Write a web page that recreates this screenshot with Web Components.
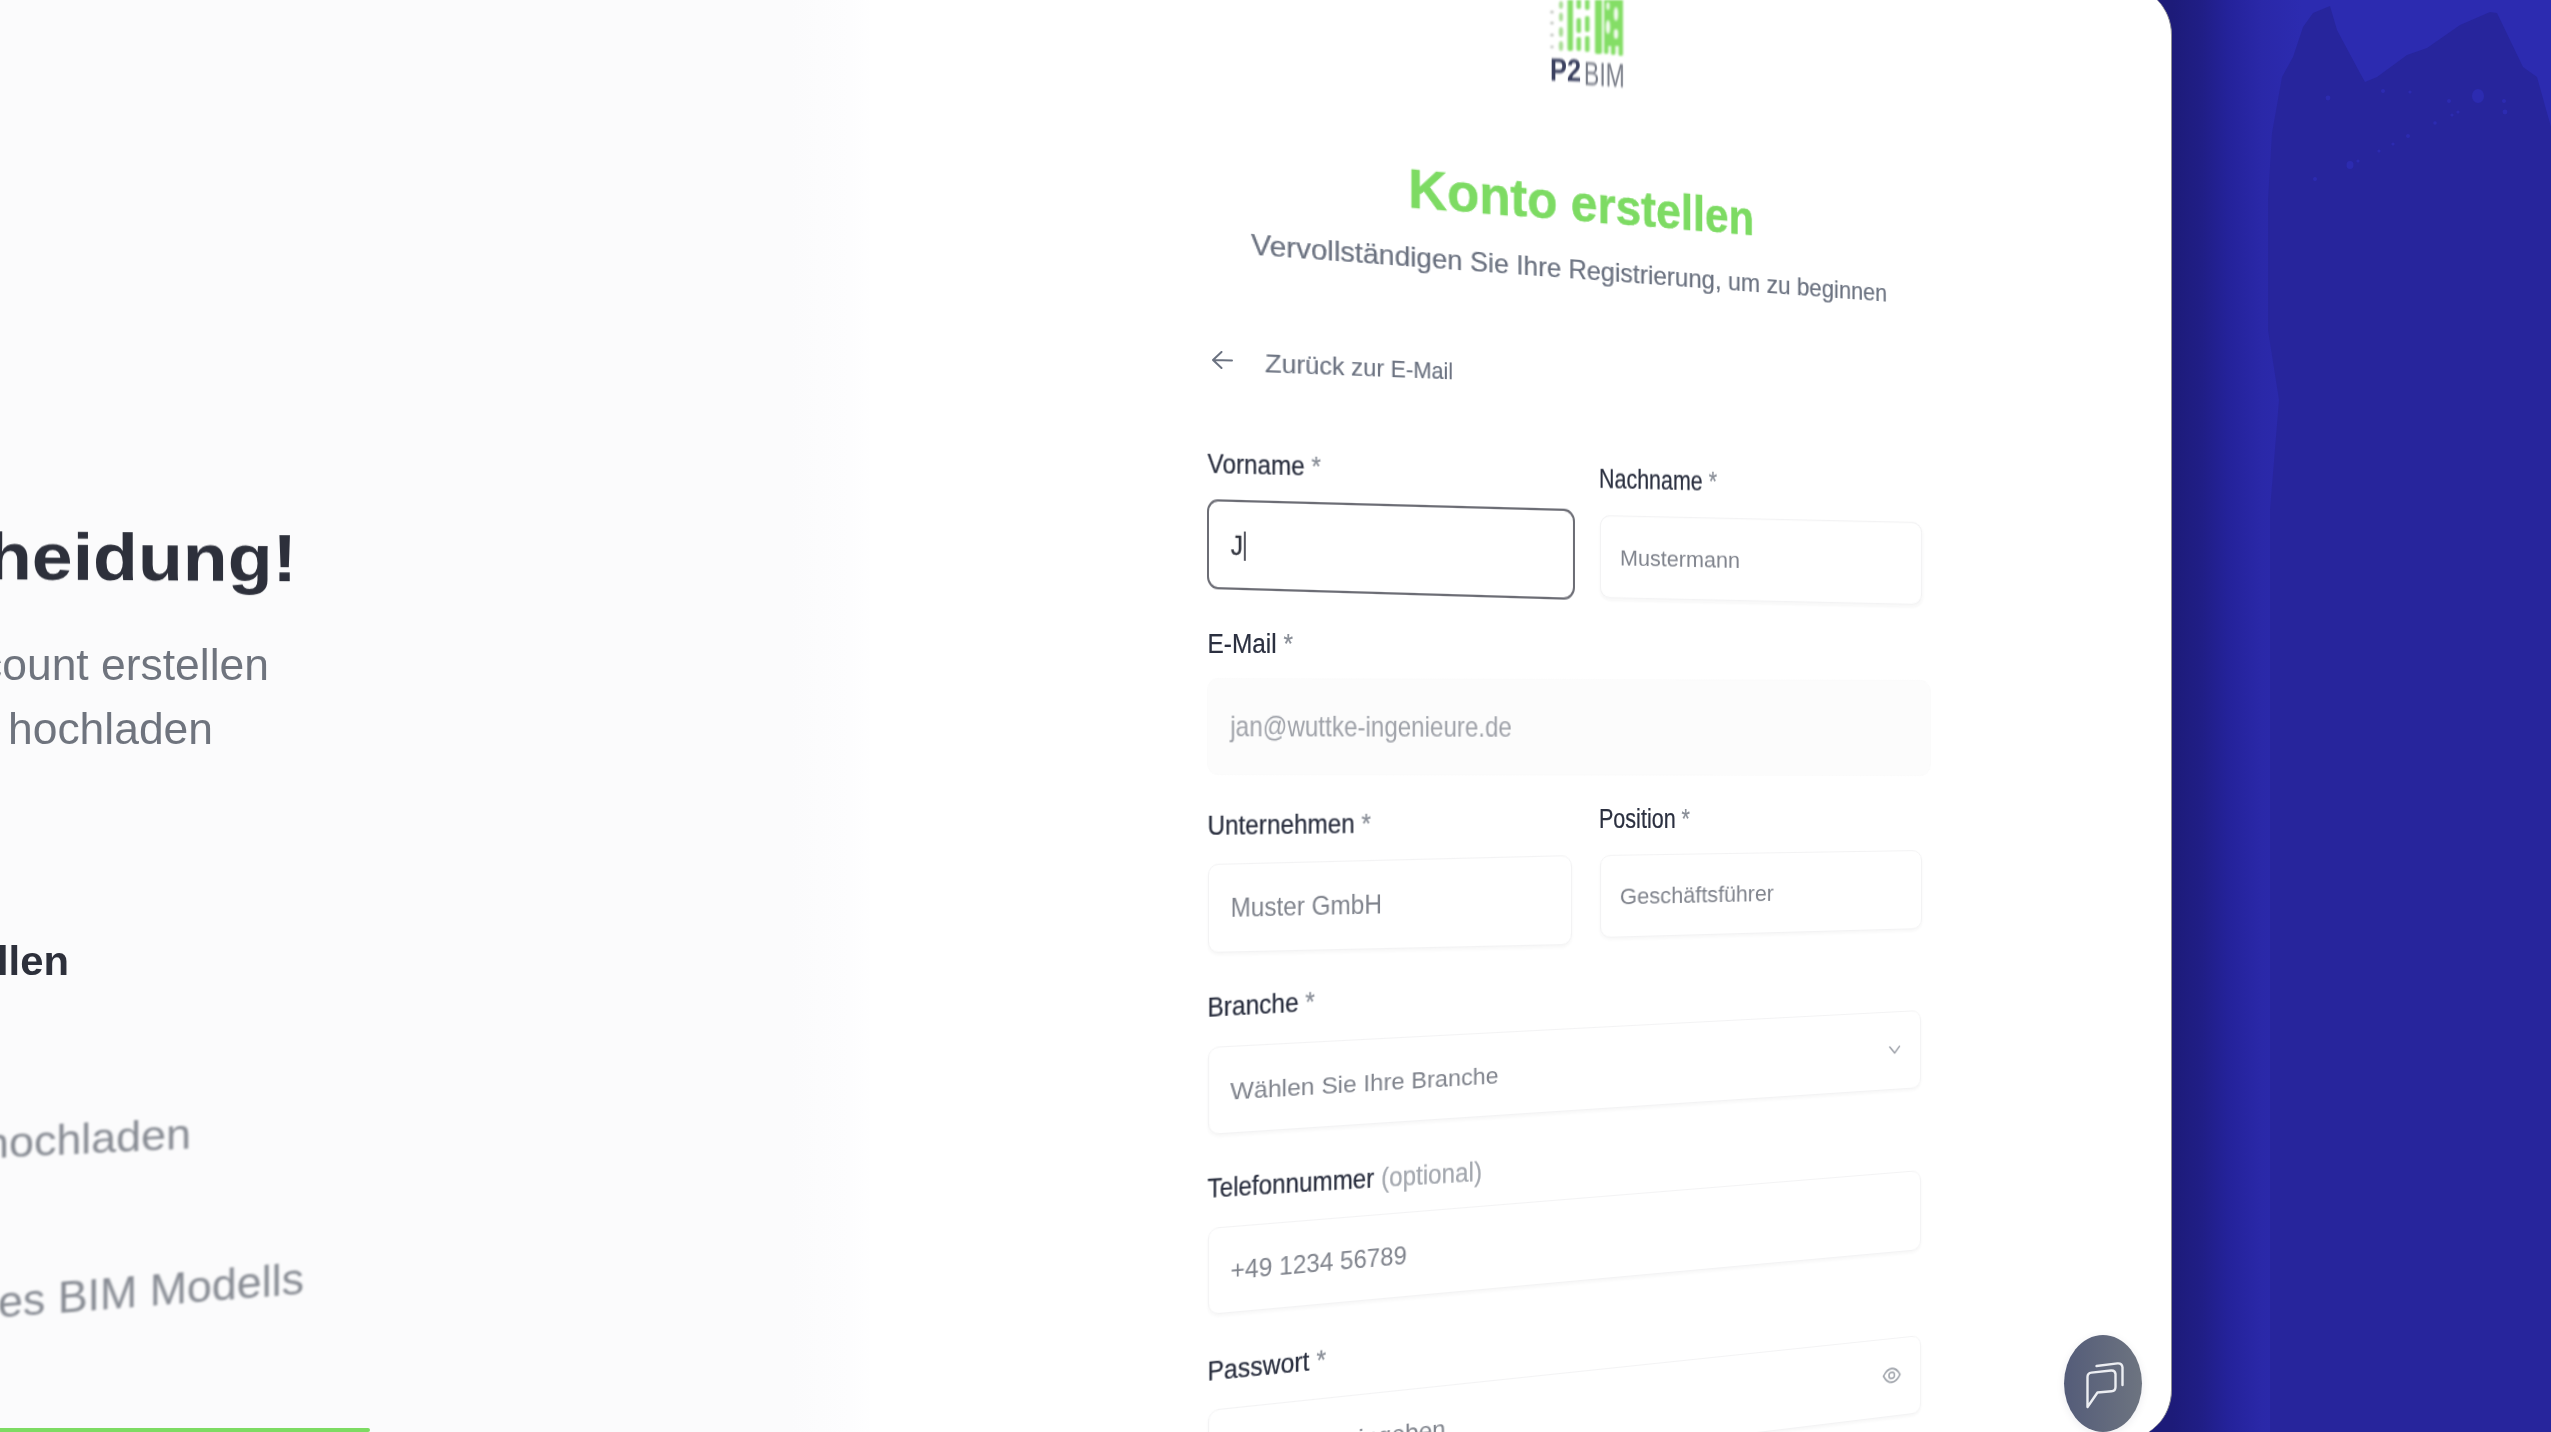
<!DOCTYPE html>
<html lang="de">
<head>
<meta charset="utf-8">
<title>P2BIM – Konto erstellen</title>
<style>
html,body{margin:0;padding:0;width:2551px;height:1432px;overflow:hidden;background:#1d1b79;font-family:"Liberation Sans",Arial,sans-serif}
</style>
</head>
<body>
<p2-stage>
  <p2-intro slot="intro">
    <p2-text f="68" v=".97" w="700" c="#2d303b" l="-13 579" r="297 581" b=".7" style="margin-top:520px">heidung!</p2-text>
    <p2-text f="44" v="1" c="#6f747e" l="-20 680" r="269 680" b=".7" style="margin-top:50px">count erstellen</p2-text>
    <p2-text f="44" v="1" c="#6f747e" l="8 744" r="213 744" b=".7" style="margin-top:22px">hochladen</p2-text>
    <p2-text f="40" v="1" w="700" c="#2d303b" l="-3 975" r="69 975" b=".7" style="margin-top:190px">llen</p2-text>
    <p2-text f="42" v="1" c="#878b93" l="-16 1159" r="191 1149" b=".8" style="margin-top:140px">hochladen</p2-text>
    <p2-text f="44" v="1" c="#878b93" l="-2 1318" r="304 1294" b=".8" style="margin-top:110px">es BIM Modells</p2-text>
    <p2-bar></p2-bar>
  </p2-intro>
  <p2-form slot="form">
    <p2-logo></p2-logo>
    <p2-text f="47" v="1.19 1.03" w="700" s=".5" c="#7ddb63" l="1408 207" r="1754 235" b=".6" style="margin-top:80px;margin-left:200px">Konto erstellen</p2-text>
    <p2-text f="24" v="1.22 1.02" s=".2" c="#6b7280" l="1251 255" r="1887 302" b=".5" style="margin-top:16px;margin-left:40px">Vervollständigen Sie Ihre Registrierung, um zu beginnen</p2-text>
    <p2-back></p2-back>
    <p2-row>
      <p2-field l="1207.500 473" r="1321 476" q="1207 499 1575 509 1575 600 1207 589" fs="24" kind="focus" value="J" pad="22 2">Vorname <i>*</i></p2-field>
      <p2-field l="1599 488" r="1717 491" q="1600 515 1922 522 1922 605 1600 598" fs="21.6" ph="Mustermann" pad="19 1">Nachname <i>*</i></p2-field>
    </p2-row>
    <p2-field l="1207.500 653" r="1293 653" q="1207 678 1931 680 1931 776 1207 775" fs="24" kind="disabled" ph="jan@wuttke-ingenieure.de" pad="22 0">E-Mail <i>*</i></p2-field>
    <p2-row>
      <p2-field l="1207.500 835" r="1371 833" q="1208 864 1572 855 1572 945 1208 953" fs="24.6" ph="Muster GmbH" pad="22 0">Unternehmen <i>*</i></p2-field>
      <p2-field l="1599 828" r="1690 828" q="1600 855 1922 850 1922 929 1600 938" fs="21.2" ph="Geschäftsführer" pad="18 2">Position <i>*</i></p2-field>
    </p2-row>
    <p2-field l="1207.500 1017" r="1315 1011" q="1208 1047 1921 1010 1921 1088 1208 1135" fs="22.8" ph="Wählen Sie Ihre Branche" icon="chevron" pad="19 2">Branche <i>*</i></p2-field>
    <p2-field l="1207.500 1198" r="1482 1181" q="1208 1228 1921 1170 1921 1250 1208 1315" fs="23.2" ph="+49 1234 56789" pad="20 3">Telefonnummer <i style="color:#a4a8af">(optional)</i></p2-field>
    <p2-field l="1207.500 1381" r="1326 1369" q="1208 1410 1921 1335 1921 1413 1208 1500" fs="23.2" ph="Passwort eingeben" icon="eye" pad="20 3">Passwort <i>*</i></p2-field>
  </p2-form>
  <p2-chat slot="chat"></p2-chat>
</p2-stage>

<script>
const warpers=[];
function homography(w,h,p){
  const [x0,y0,x1,y1,x2,y2,x3,y3]=p;
  const sx=x0-x1+x2-x3, sy=y0-y1+y2-y3, dx1=x1-x2, dx2=x3-x2, dy1=y1-y2, dy2=y3-y2;
  const den=dx1*dy2-dx2*dy1;
  const g=(sx*dy2-dx2*sy)/den, k=(dx1*sy-sx*dy1)/den;
  const a=(x1-x0+g*x1)/w, b=(x3-x0+k*x3)/h, d=(y1-y0+g*y1)/w, e=(y3-y0+k*y3)/h;
  return `matrix3d(${a},${d},0,${g/w},${b},${e},0,${k/h},0,0,1,0,${x0},${y0},0,1)`;
}
function nums(s){return (s||'').trim().split(/\s+/).map(Number)}

class P2Text extends HTMLElement{
  constructor(){super();
    const f=this.getAttribute('f')||24;
    const stroke=this.getAttribute('s')||0;
    this.attachShadow({mode:'open'}).innerHTML=`<style>
      :host{display:inline-block;flex:none;white-space:nowrap;line-height:1;font-family:"Liberation Sans",Arial,sans-serif;
        font-size:${f}px;font-weight:${this.getAttribute('w')||400};color:${this.getAttribute('c')||'#2b3040'};
        -webkit-text-stroke:${stroke}px currentColor;
        transform-origin:0 0;filter:blur(${this.getAttribute('b')||.55}px);align-self:flex-start}
      ::slotted(i){font-style:normal;color:#8a8f98}
    </style><slot></slot>`;
  }
  connectedCallback(){warpers.push(this)}
  quad(){
    const F=+this.getAttribute('f')||24, vv=nums(this.getAttribute('v')||'1');
    const sl=vv[0], sr=vv[1]===undefined?vv[0]:vv[1];
    const [xl,yl]=nums(this.getAttribute('l')), [xr,yr]=nums(this.getAttribute('r'));
    const up=.8465*F, dn=.1535*F;
    return [xl,yl-up*sl, xr,yr-up*sr, xr,yr+dn*sr, xl,yl+dn*sl];
  }
}
class P2Input extends HTMLElement{
  constructor(){super();
    const icon=this.getAttribute('icon')||'';
    const fs=this.getAttribute('fs')||24;
    const [pl,pt]=nums(this.getAttribute('pad')||'22 2');
    const ic=icon==='chevron'
      ?`<svg width="14" height="10" viewBox="0 0 14 10" fill="none" stroke="#9a9ea6" stroke-width="1.6" stroke-linecap="round" stroke-linejoin="round"><path d="M1.5 2 7 8.5 12.5 2"/></svg>`
      :icon==='eye'
      ?`<svg width="22" height="22" viewBox="0 0 22 22" fill="none" stroke="#a3a7ae" stroke-width="1.8" style="margin-top:-8px"><path d="M1.5 11C4 6.5 7.2 4 11 4s7 2.5 9.5 7c-2.5 4.5-5.700 7-9.500 7S4 15.500 1.500 11Z"/><circle cx="11" cy="11" r="3.200"/></svg>`:'';
    const content=this.hasAttribute('value')
      ?`<span class="val">${this.getAttribute('value')}</span><span class="caret"></span>`
      :`<span class="ph">${this.getAttribute('ph')||''}</span>`;
    this.attachShadow({mode:'open'}).innerHTML=`<style>
      :host{display:block;box-sizing:border-box;height:80px;transform-origin:0 0;background:#fff;
        border:1px solid #f3f3f4;border-radius:10px;box-shadow:0 2px 3px rgba(40,40,60,.04);
        filter:blur(.7px);font:${fs}px/1 "Liberation Sans",Arial,sans-serif}
      :host([kind=focus]){border:2px solid #6c6d75;border-radius:11px;box-shadow:none;filter:blur(.4px)}
      :host([kind=disabled]){background:#fcfcfc;border-color:#fbfbfb;box-shadow:none}
      .in{height:100%;box-sizing:border-box;display:flex;align-items:center;padding:${pt}px 24px 0 ${pl}px}
      :host([icon]) .in{padding-right:22px}
      .ph{color:#80848d;white-space:nowrap}
      :host([kind=disabled]) .ph{color:#a0a3aa}
      .val{color:#30333d;-webkit-text-stroke:.3px currentColor}.caret{width:1.500px;height:26px;background:#55565f;margin-left:1px}
      .sp{flex:1}
      svg{flex:none;margin-top:-4px}
    </style><div class="in">${content}<span class="sp"></span>${ic}</div>`;
  }
  connectedCallback(){warpers.push(this)}
  quad(){return nums(this.getAttribute('q'))}
}
class P2Field extends HTMLElement{
  constructor(){super();
    const A=n=>this.getAttribute(n);
    const kindAttr=A('kind')?`kind="${A('kind')}"`:'';
    const iconAttr=A('icon')?`icon="${A('icon')}"`:'';
    const valAttr=A('value')?`value="${A('value')}"`:'';
    this.attachShadow({mode:'open'}).innerHTML=`<style>
      :host{display:flex;flex-direction:column;gap:14px;min-width:0}
    </style>
    <p2-text f="24" v="1.13" s=".22" l="${A('l')}" r="${A('r')}"><slot></slot></p2-text>
    <p2-input q="${A('q')}" fs="${A('fs')}" pad="${A('pad')||'22 2'}" ph="${A('ph')||''}" ${kindAttr} ${iconAttr} ${valAttr}></p2-input>`;
  }
}
class P2Row extends HTMLElement{
  constructor(){super();
    this.attachShadow({mode:'open'}).innerHTML=`<style>:host{display:grid;grid-template-columns:366px 322px;column-gap:26px}</style><slot></slot>`;
  }
}
class P2Back extends HTMLElement{
  constructor(){super();
    this.attachShadow({mode:'open'}).innerHTML=`<style>
      :host{display:flex;align-items:center;gap:32px;margin-top:38px;margin-left:3px}
      svg{flex:none;filter:blur(.4px)}
    </style>
    <svg width="22" height="20" viewBox="0 0 22 20" fill="none" stroke="#6b7280" stroke-width="2" stroke-linecap="round" stroke-linejoin="round"><path d="M21 10.500 2 10M10.500 2 2 10l8.500 8"/></svg>
    <p2-text f="22" v="1.2 1.05" s=".15" c="#6b7280" l="1265 373" r="1453 380">Zurück zur E-Mail</p2-text>`;
  }
}
class P2Logo extends HTMLElement{
  constructor(){super();
    const g='#84de66';
    this.attachShadow({mode:'open'}).innerHTML=`<style>
      :host{display:flex;flex-direction:column;margin-left:341px;height:90px;align-self:flex-start}
      svg{display:block;filter:blur(.9px)}
      .t{display:flex;gap:3px}
    </style>
    <svg width="76" height="58" viewBox="0 0 76 58">
      <g fill="#b7bdb6"><circle cx="3" cy="12" r="1.600"/><circle cx="3" cy="23" r="1.600"/><circle cx="3" cy="35" r="1.600"/><circle cx="3" cy="47" r="1.400"/></g>
      <g fill="#a9dd96"><ellipse cx="12" cy="5" rx="2" ry="4"/><ellipse cx="12" cy="17" rx="2" ry="4.500"/><ellipse cx="12" cy="32" rx="2.200" ry="5"/><ellipse cx="12" cy="46" rx="2.200" ry="5"/></g>
      <g fill="${g}">
        <rect x="18.500" y="-2" width="5.500" height="53" rx="2"/>
        <rect x="27.500" y="-2" width="4.500" height="11" rx="2"/><rect x="27.500" y="18" width="4.500" height="15" rx="2"/><rect x="27.500" y="37" width="4.500" height="14" rx="2"/>
        <rect x="36" y="-2" width="4.500" height="12" rx="2"/><rect x="36" y="16" width="4.500" height="16" rx="2"/><rect x="36" y="36" width="4.500" height="16" rx="2"/>
        <rect x="46" y="-2" width="7" height="56" rx="2"/>
        <rect x="55" y="-2" width="19" height="48"/>
        <rect x="55" y="42" width="4.500" height="12" rx="2"/><rect x="62" y="42" width="4.500" height="13" rx="2"/><rect x="69.500" y="42" width="4.500" height="14" rx="2"/>
      </g>
      <g fill="#f2fbee"><ellipse cx="59" cy="27" rx="2.200" ry="7"/><ellipse cx="67" cy="14" rx="2.200" ry="7"/><ellipse cx="67" cy="34" rx="2.200" ry="5"/><ellipse cx="59" cy="6" rx="1.600" ry="4"/></g>
    </svg>
    <div class="t">
      <p2-text f="32" v="1" w="700" c="#3b4160" l="1550 80.500" r="1581 81.500" b=".8">P2</p2-text>
      <p2-text f="32" v="1.02" c="#797d88" l="1584 84.500" r="1625 87" b=".8">BIM</p2-text>
    </div>`;
  }
}
class P2Bar extends HTMLElement{
  constructor(){super();
    this.attachShadow({mode:'open'}).innerHTML=`<style>:host{display:block;width:370px;height:4px;background:#7ddb63;margin-top:auto;border-radius:0 2px 2px 0;flex:none}</style>`;
  }
}
class P2Intro extends HTMLElement{
  constructor(){super();
    this.attachShadow({mode:'open'}).innerHTML=`<style>
      :host{display:flex;flex-direction:column;height:100%;box-sizing:border-box;padding-bottom:8px;
        width:870px;flex:none;background:linear-gradient(90deg,#fbfbfc 0,#fbfbfc 790px,#fdfdfe 850px,#fff 880px)}
    </style><slot></slot>`;
  }
}
class P2Form extends HTMLElement{
  constructor(){super();
    this.attachShadow({mode:'open'}).innerHTML=`<style>
      :host{display:flex;flex-direction:column;gap:18px;flex:none;width:722px;padding-top:15px;margin-left:338px}
    </style><slot></slot>`;
  }
}
class P2Chat extends HTMLElement{
  constructor(){super();
    this.attachShadow({mode:'open'}).innerHTML=`<style>
      :host{position:absolute;right:29px;bottom:8px;width:78px;height:97px;border-radius:50%;
        background:linear-gradient(90deg,#545c79,#6d7480);filter:blur(.4px);box-shadow:0 2px 8px rgba(30,30,60,.08)}
      svg{display:block}
    </style>
    <svg width="78" height="97" viewBox="0 0 78 97" fill="none" stroke="#eceef2" stroke-width="2.400" stroke-linecap="round" stroke-linejoin="round">
      <path d="M23.500 72V42q0-4 4-4.400l19.500-2.100q4-.4 4.500 3.500V52q0 4-4 4.200L33.500 57.500Z"/>
      <path d="M32.500 31l21-2.600q4.500-.4 5 4V50"/>
    </svg>`;
  }
}
class P2Aside extends HTMLElement{
  constructor(){super();
    this.attachShadow({mode:'open'}).innerHTML=`<style>
      :host{display:block;position:relative;flex:1;min-width:0;height:100%;overflow:hidden;
        background:linear-gradient(90deg,#1d1b79 0,#201e86 30px,#24229a 56px,#2a28a8 90px,#2c2bb0 130px)}
      svg{display:block;position:absolute;inset:0}
    </style>
    <svg width="379" height="1432" viewBox="0 0 379 1432">
      <path fill="#27259c" d="M98 1432V510L107 400 96 330V200L100 133 110 77 121 57 131 27 141 13 158 6 165 30 188 73 193 82 205 77 235 55 255 48 288 25 318 12 325 13 351 67 365 77 379 127V1432Z"/>
      <g fill="#2c2bb0"><circle cx="156" cy="98" r="2.400"/><circle cx="211" cy="91" r="2"/><circle cx="238" cy="92" r="1.600"/><ellipse cx="306" cy="96" rx="6" ry="7"/><circle cx="277" cy="101" r="2"/><circle cx="332" cy="101" r="2"/><circle cx="333" cy="112" r="2.400"/><circle cx="286" cy="112" r="1.600"/><circle cx="280" cy="115" r="1.600"/><circle cx="263" cy="123" r="1.800"/><circle cx="236" cy="136" r="2"/><circle cx="221" cy="144" r="1.600"/><circle cx="207" cy="151" r="1.600"/><circle cx="186" cy="161" r="1.600"/><ellipse cx="178" cy="165" rx="3.500" ry="4"/><circle cx="143" cy="179" r="2"/></g>
    </svg>`;
  }
}
class P2Stage extends HTMLElement{
  constructor(){super();
    this.attachShadow({mode:'open'}).innerHTML=`<style>
      :host{display:flex;width:2551px;height:1432px;overflow:hidden;position:relative;background:#1d1b79}
      .card{display:flex;width:2172px;height:1455px;margin-top:-15px;flex:none;background:#fff;overflow:hidden;
        border-radius:0 50px 50px 0;border-right:1px solid #8d8d96;box-sizing:border-box;position:relative;z-index:1}
      .wrap{display:flex;width:100%;height:100%}
      .side{height:1432px}
    </style>
    <div class="card"><div class="wrap"><slot name="intro"></slot><slot name="form"></slot></div><slot name="chat"></slot></div>
    <p2-aside class="side"></p2-aside>`;
  }
}
customElements.define('p2-text',P2Text);
customElements.define('p2-input',P2Input);
customElements.define('p2-field',P2Field);
customElements.define('p2-row',P2Row);
customElements.define('p2-back',P2Back);
customElements.define('p2-logo',P2Logo);
customElements.define('p2-bar',P2Bar);
customElements.define('p2-intro',P2Intro);
customElements.define('p2-form',P2Form);
customElements.define('p2-chat',P2Chat);
customElements.define('p2-aside',P2Aside);
customElements.define('p2-stage',P2Stage);
// perspective: every warped element is mapped from its flow box to its place on the tilted surface
const plans=warpers.map(el=>{
  const r=el.getBoundingClientRect(), q=el.quad().slice();
  for(let i=0;i<8;i+=2){q[i]-=r.left;q[i+1]-=r.top}
  return [el,homography(r.width,r.height,q)];
});
plans.forEach(([el,m])=>{el.style.transform=m});
</script>
</body>
</html>
